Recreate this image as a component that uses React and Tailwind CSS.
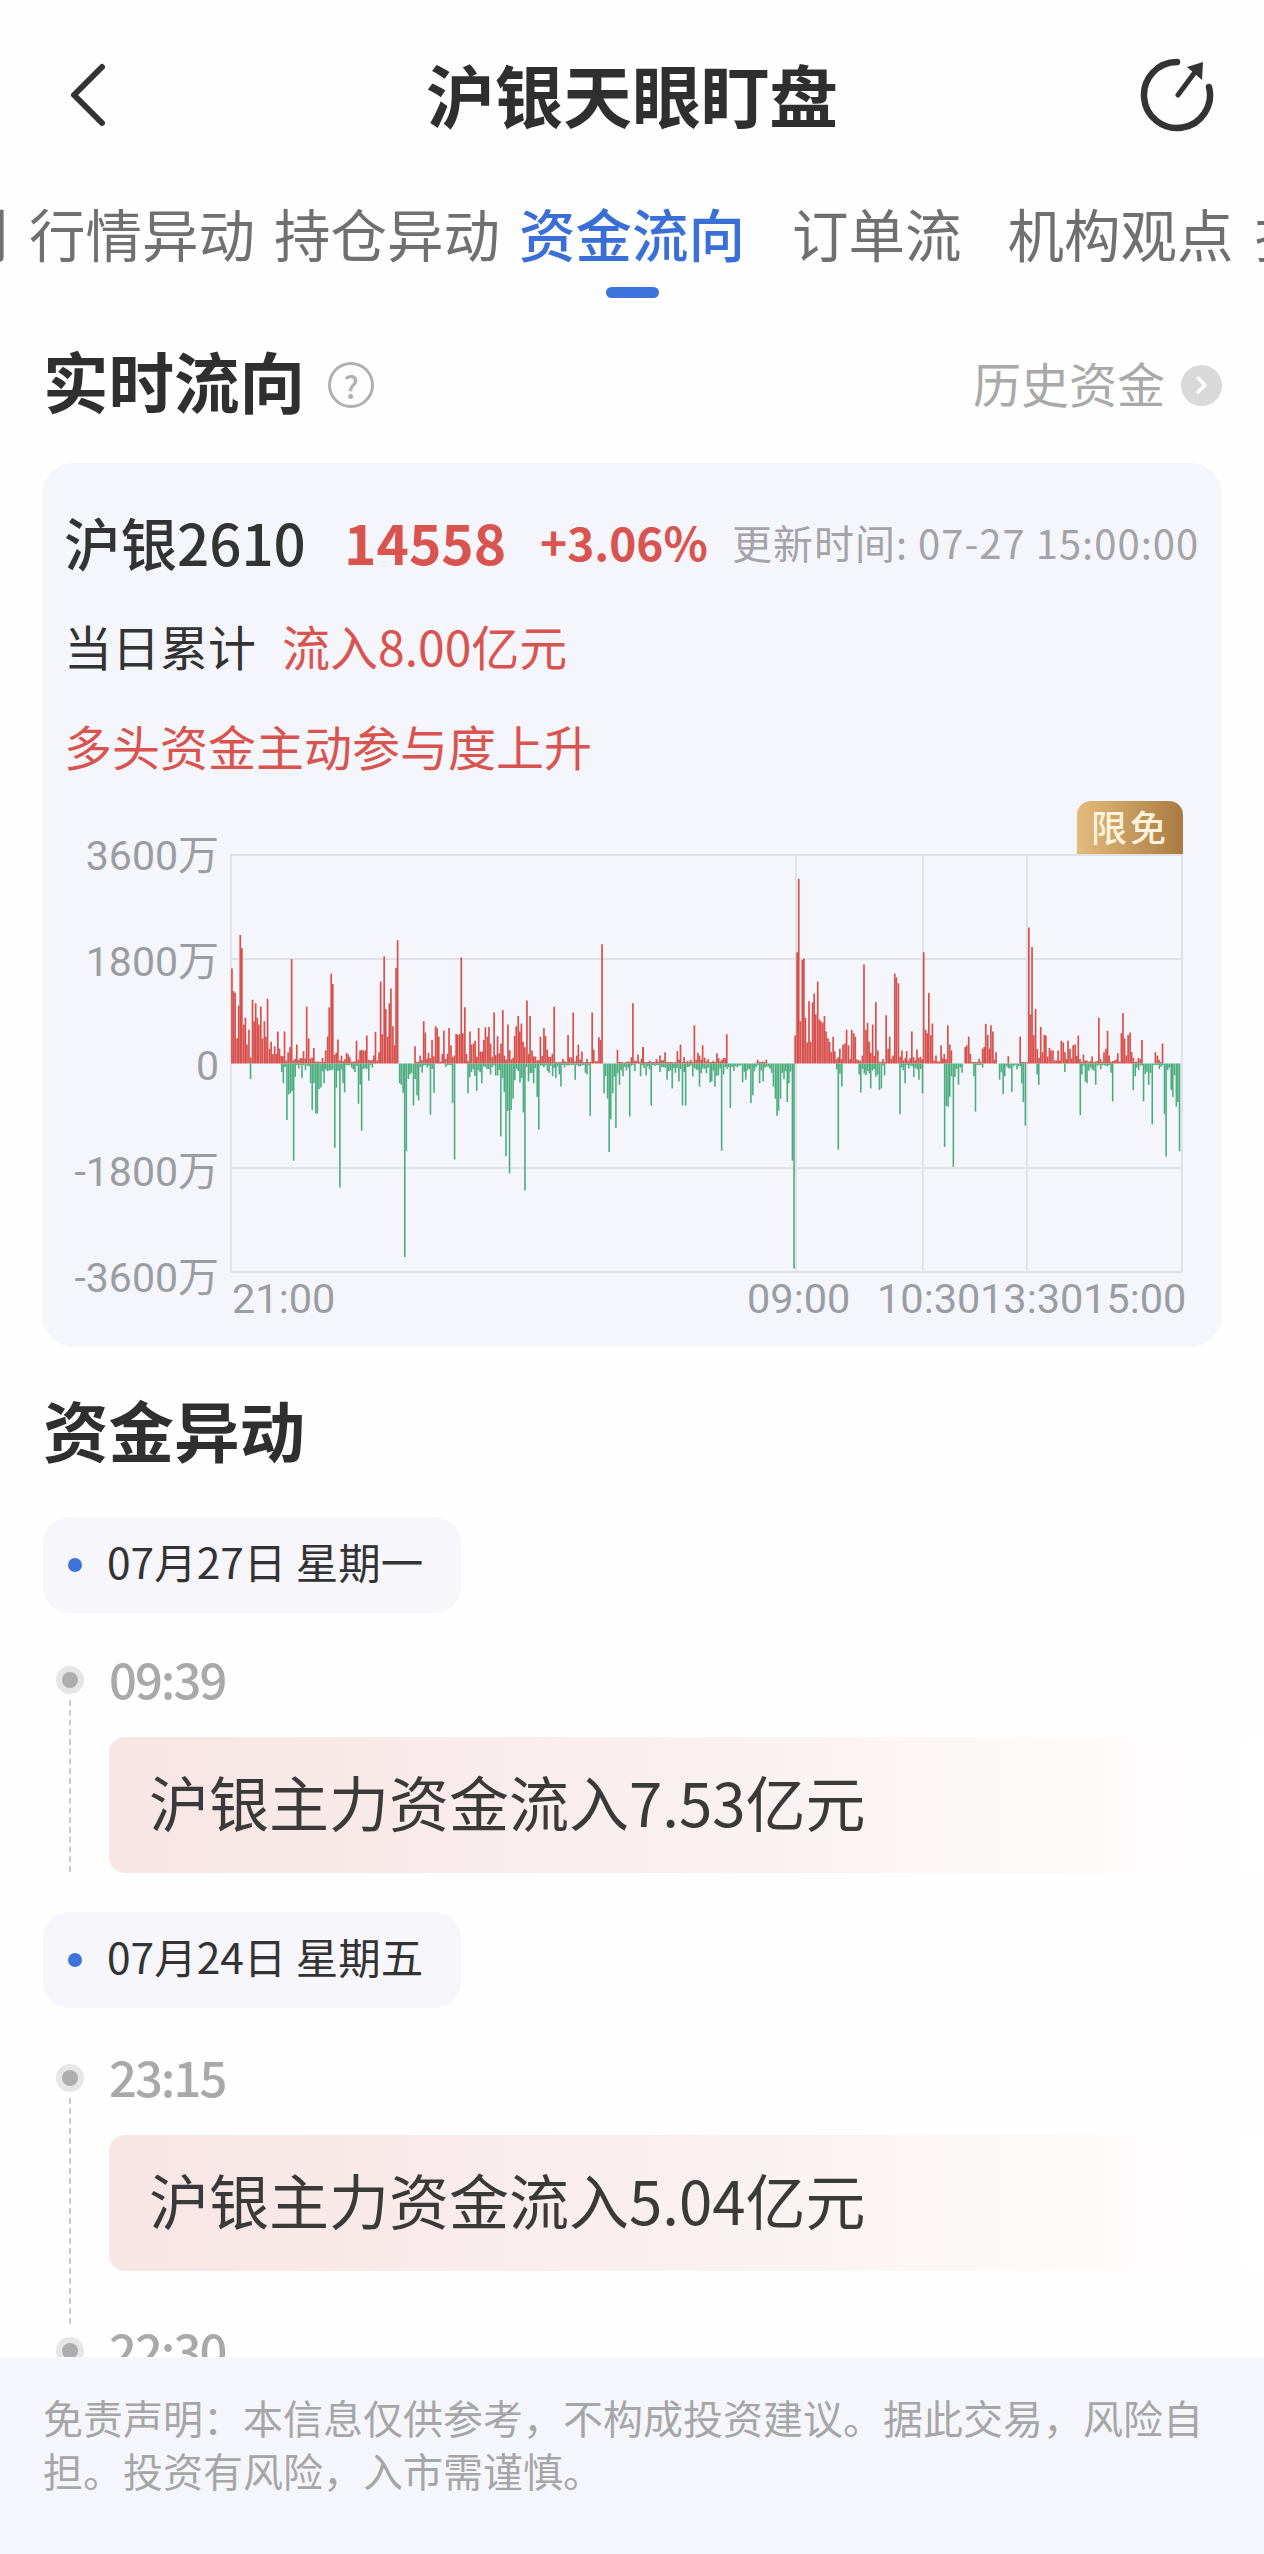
const RL = [[488,547],[492,613],[496,618],[501,750],[505,655],[509,450],[513,488],[518,710],[522,690],[526,768],[531,725],[540,638],[544,700],[548,648],[552,690],[556,710],[561,657],[565,750],[570,700],[574,745],[578,635],[583,780],[587,760],[596,773],[600,795],[604,730],[608,780],[621,730],[630,790],[635,775],[639,520],[652,768],[669,787],[677,658],[682,750],[695,778],[717,807],[725,785],[730,745],[734,660],[739,562],[743,592],[756,753],[765,800],[778,792],[782,797],[786,805],[803,757],[812,785],[816,783],[820,785],[825,785],[829,742],[847,800],[851,731],[860,790],[864,585],[868,738],[873,512],[877,665],[882,745],[886,648],[890,605],[895,715],[903,545],[907,465],[951,773],[964,800],[973,700],[977,733],[985,792],[994,755],[1003,715],[1007,720],[1011,745],[1020,795],[1024,728],[1033,795],[1037,720],[1042,770],[1055,737],[1059,740],[1064,738],[1068,515],[1072,735],[1077,660],[1081,795],[1090,730],[1094,768],[1099,765],[1103,757],[1112,720],[1125,755],[1129,718],[1134,745],[1138,717],[1142,765],[1151,675],[1173,668],[1177,800],[1186,710],[1203,743],[1207,715],[1212,685],[1216,730],[1220,707],[1234,640],[1242,685],[1247,785],[1268,745],[1277,720],[1281,743],[1303,658],[1311,820],[1325,810],[1338,740],[1342,805],[1347,805],[1351,675],[1360,800],[1364,768],[1373,788],[1386,810],[1399,675],[1403,783],[1416,747],[1420,755],[1424,477],[1463,783],[1481,820],[1490,817],[1498,805],[1502,648],[1515,797],[1528,775]];
const GL = [[535,868],[614,848],[618,880],[627,987],[644,1105],[648,862],[657,838],[665,865],[674,842],[687,880],[691,958],[700,968],[704,968],[708,898],[713,893],[721,880],[748,1068],[752,893],[761,1183],[769,880],[773,907],[791,835],[795,840],[799,848],[808,940],[816,1018],[834,873],[843,835],[912,880],[916,885],[921,908],[925,1385],[929,1078],[934,868],[938,855],[942,850],[947,945],[956,915],[960,930],[969,850],[982,835],[990,972],[999,908],[1029,833],[1046,938],[1051,1102],[1085,910],[1107,902],[1120,880],[1142,855],[1155,858],[1160,858],[1168,1035],[1181,1092],[1190,1142],[1194,958],[1199,925],[1225,965],[1229,1192],[1238,875],[1251,880],[1260,920],[1264,1015],[1286,845],[1290,850],[1299,860],[1307,865],[1316,855],[1320,890],[1329,835],[1356,870],[1382,850],[1386,855],[1394,975],[1429,910],[1433,860],[1438,925],[1442,1080],[1446,985],[1451,910],[1459,1010],[1468,885],[1477,860],[1494,977],[1507,845]];
const RR = [[10,775],[27,815],[44,810],[53,800],[66,790],[88,820],[97,787],[105,768],[114,805],[123,815],[131,812],[140,712],[149,792],[153,800],[161,770],[166,806],[175,810],[188,815],[197,793],[222,738],[300,812],[322,812],[395,742],[400,500],[404,287],[408,700],[413,522],[417,518],[421,690],[430,642],[434,760],[439,645],[443,620],[447,680],[452,585],[456,695],[460,700],[465,705],[469,685],[473,730],[478,750],[482,760],[486,790],[491,745],[495,788],[508,780],[516,768],[521,765],[525,725],[530,770],[538,725],[543,735],[547,745],[565,800],[569,535],[574,725],[578,705],[582,760],[591,710],[599,645],[604,785],[617,810],[625,683],[630,780],[634,745],[647,562],[651,573],[656,590],[665,785],[677,787],[690,730],[703,782],[720,500],[725,725],[729,735],[733,618],[738,740],[742,707],[751,800],[764,770],[772,795],[781,712],[786,768],[790,785],[825,775],[829,770],[834,745],[838,795],[860,810],[869,780],[873,775],[877,708],[882,740],[890,712],[895,730],[903,790],[934,802],[964,745],[982,820],[986,428],[990,680],[994,485],[1003,665],[1016,717],[1025,740],[1029,742],[1038,778],[1042,785],[1047,785],[1060,785],[1068,757],[1073,762],[1085,757],[1090,780],[1098,770],[1103,768],[1111,742],[1124,797],[1146,803],[1163,690],[1176,790],[1181,780],[1185,728],[1189,800],[1211,793],[1220,735],[1224,676],[1228,750],[1237,740],[1242,733],[1246,790],[1272,755],[1306,790],[1311,800],[1324,765]];
const GR = [[4,860],[18,858],[31,945],[40,830],[53,848],[71,870],[84,895],[92,850],[101,875],[110,945],[118,945],[136,860],[153,890],[180,878],[184,875],[192,890],[209,1076],[214,855],[231,952],[240,845],[262,878],[270,870],[283,938],[288,915],[292,845],[305,880],[314,875],[340,890],[345,925],[349,975],[353,960],[358,925],[375,935],[379,880],[388,1105],[392,1418],[500,840],[504,1073],[513,890],[557,855],[561,907],[586,895],[608,900],[613,895],[621,858],[660,970],[673,880],[682,838],[695,862],[708,870],[717,910],[773,1065],[795,1123],[799,862],[808,885],[817,850],[847,860],[851,963],[869,835],[912,870],[921,912],[925,860],[943,905],[956,840],[968,880],[972,935],[977,1003],[1007,855],[1011,885],[1077,848],[1116,973],[1120,855],[1129,875],[1133,880],[1155,885],[1168,840],[1194,850],[1198,933],[1250,900],[1255,860],[1276,933],[1289,885],[1298,1000],[1316,840],[1329,970],[1333,1093],[1346,900],[1350,920],[1359,948],[1363,935],[1367,1078]];

const KX = 620 / 1568;
const KY = 540 / 1568;
const PLOT_X = 231;
const ZERO = 1063.5 - 854;

function toBars(list, originX) {
  const out = [];
  let seed = originX + 7;
  const rnd = () => {
    seed = (seed * 9301 + 49297) % 233280;
    return seed / 233280;
  };
  list.forEach(([zx, zy], i) => {
    const x = originX + zx * KX - PLOT_X;
    const h = Math.abs(zy - 823) * KY;
    out.push([x, h]);
    const next = list[i + 1];
    if (next && next[0] - zx > 6 && next[0] - zx < 30) {
      const nh = Math.abs(next[1] - 823) * KY;
      for (let fx = zx + 4.35; fx < next[0] - 2; fx += 4.35) {
        out.push([originX + fx * KX - PLOT_X, Math.max(1.5, Math.min(h, nh) * (0.15 + rnd() * 0.4))]);
      }
    }
  });
  return out;
}

const redBars = [...toBars(RL, 40), ...toBars(RR, 640)];
const greenBars = [...toBars(GL, 40), ...toBars(GR, 640)];

const DISCLAIMER = "\u514D\u8D23\u58F0\u660E\uFF1A\u672C\u4FE1\u606F\u4EC5\u4F9B\u53C2\u8003\uFF0C\u4E0D\u6784\u6210\u6295\u8D44\u5EFA\u8BAE\u3002\u636E\u6B64\u4EA4\u6613\uFF0C\u98CE\u9669\u81EA\u62C5\u3002\u6295\u8D44\u6709\u98CE\u9669\uFF0C\u5165\u5E02\u9700\u8C28\u614E\u3002";

function Chart() {
  return (
    <svg width="953" height="419" viewBox="0 0 953 419" className="block">
      <g stroke="#e0e2e9" strokeWidth="2" fill="none">
        <rect x="1" y="1" width="951" height="417" />
        <line x1="0" y1="105" x2="953" y2="105" />
        <line x1="0" y1="314" x2="953" y2="314" />
        <line x1="566" y1="0" x2="566" y2="419" />
        <line x1="693" y1="0" x2="693" y2="419" />
        <line x1="797" y1="0" x2="797" y2="419" />
      </g>
      <g stroke="#d8504c" strokeWidth="1.7">
        {redBars.map(([x, h], i) => (
          <line key={i} x1={x} x2={x} y1={ZERO} y2={ZERO - h} />
        ))}
      </g>
      <g stroke="#4cad7f" strokeWidth="1.6">
        {greenBars.map(([x, h], i) => (
          <line key={i} x1={x} x2={x} y1={ZERO} y2={ZERO + h} />
        ))}
      </g>
    </svg>
  );
}

function DatePill({ children }) {
  return (
    <div className="flex h-[96px] w-[418px] items-center rounded-[26px] bg-[#f6f6fb] pl-[25px]">
      <span className="h-[14px] w-[14px] rounded-full bg-[#3f73dc]" />
      <span className="ml-[25px] pb-[8px] text-[42.5px] leading-none text-[#333]">{children}</span>
    </div>
  );
}

function TimeDot() {
  return (
    <span className="flex h-[28px] w-[28px] shrink-0 items-center justify-center rounded-full bg-[#e6e6e6]">
      <span className="h-[16px] w-[16px] rounded-full bg-[#adadad]" />
    </span>
  );
}

function Event({ time, text, lineClass, tail }) {
  return (
    <div className="relative pl-[66px]">
      <div className={`absolute left-[26px] top-[50px] w-0 border-l-2 border-dashed border-[#c9c9c9] ${lineClass}`} />
      <div className="flex h-[60px] items-center">
        <span className="absolute left-[13px]"><TimeDot /></span>
        <span className="pb-[6px] text-[49px] font-medium leading-none tracking-[-2px] text-[#a9a9a9]">{time}</span>
      </div>
      <div className="mt-[27px] flex h-[136px] items-center rounded-l-[16px] bg-gradient-to-r from-[#f8e5e5] via-[#faf0f0] to-[#ffffff] pl-[40px]">
        <span className="pb-[8px] text-[60px] leading-none text-[#3a3a3a]">{text}</span>
      </div>
      {tail}
    </div>
  );
}

export default function App() {
  return (
    <div
      className="relative h-[2554px] w-[1264px] overflow-hidden bg-[#fefefe]"
      style={{ fontFamily: '"Noto Sans CJK SC", "Noto Sans", sans-serif' }}
    >
      <header className="flex h-[190px] items-center pl-[66px] pr-[48px]">
        <svg width="44" height="64" viewBox="0 0 44 64" fill="none" className="shrink-0">
          <path d="M36 4 L8 32 L36 60" stroke="#333" strokeWidth="6" strokeLinecap="round" strokeLinejoin="round" />
        </svg>
        <h1 className="ml-[14px] flex-1 pb-[4px] text-center text-[68.7px] font-bold leading-none text-[#2f2f2f]">沪银天眼盯盘</h1>
        <svg width="76" height="76" viewBox="0 0 76 76" fill="none" className="shrink-0">
          <path d="M37 5 A33 33 0 1 0 69 30" stroke="#333" strokeWidth="6.5" strokeLinecap="round" />
          <path d="M38 38 L58 11" stroke="#333" strokeWidth="5" strokeLinecap="round" />
          <path d="M47 10 L63 5 L62 23 Z" fill="#333" />
        </svg>
      </header>

      <nav className="relative flex h-[108px] items-start overflow-hidden whitespace-nowrap text-[56.5px] leading-[84px] text-[#707070]">
        <span className="ml-[-48px] w-[56.5px]">别</span>
        <span className="ml-[20.5px] w-[226px]">行情异动</span>
        <span className="ml-[19px] w-[226px]">持仓异动</span>
        <span className="ml-[19px] w-[226px] font-medium text-[#3b6fd8]">资金流向</span>
        <span className="ml-[47px] w-[169.5px]">订单流</span>
        <span className="ml-[46px] w-[226px]">机构观点</span>
        <span className="ml-[21.5px] w-[56.5px]">持</span>
        <span className="absolute bottom-0 left-[606px] h-[11px] w-[53px] rounded-full bg-[#3f73dc]" />
      </nav>

      <section className="mt-[37px] flex h-[100px] items-center justify-between pl-[43px] pr-[42px]">
        <div className="flex items-center">
          <h2 className="pb-[10px] text-[65.5px] font-bold leading-none text-[#2f2f2f]">实时流向</h2>
          <span className="ml-[23px] flex h-[46px] w-[46px] items-center justify-center rounded-full border-[3.5px] border-[#b0b0b0] text-[31px] font-medium leading-none text-[#b0b0b0]">?</span>
        </div>
        <div className="flex items-center">
          <span className="pb-[6px] text-[48px] leading-none text-[#a9a9a9]">历史资金</span>
          <span className="ml-[16px] flex h-[41px] w-[41px] items-center justify-center rounded-full bg-[#d9d9d9]">
            <svg width="14" height="20" viewBox="0 0 14 20" fill="none">
              <path d="M3 3 L10 10 L3 17" stroke="#fff" strokeWidth="3.5" strokeLinecap="round" strokeLinejoin="round" />
            </svg>
          </span>
        </div>
      </section>

      <section className="mx-[42px] mt-[28px] h-[884px] rounded-[32px] bg-[#f5f6fb] pl-[22px] pt-[41px]">
        <div className="flex h-[80px] items-center whitespace-nowrap">
          <span className="w-[241px] pb-[6px] text-[56.5px] font-medium leading-none text-[#333]">沪银2610</span>
          <span className="ml-[39px] w-[162px] pb-[6px] text-[55px] font-bold leading-none text-[#d9534f]">14558</span>
          <span className="ml-[34px] w-[166px] pb-[6px] text-[46px] font-bold leading-none text-[#d9534f]">+3.06%</span>
          <span className="ml-[26px] pb-[4px] text-[40px] leading-none tracking-[1px] text-[#a3a3a8]">更新时间: 07-27 15:00:00</span>
        </div>
        <div className="mt-[34px] flex h-[60px] items-center pb-[6px] leading-none">
          <span className="text-[48px] text-[#333]">当日累计</span>
          <span className="ml-[26px] text-[48px] text-[#d9534f]">流入8.00亿元</span>
        </div>
        <div className="mt-[40px] flex h-[60px] items-center pb-[6px] text-[48px] leading-none text-[#d9534f]">多头资金主动参与度上升</div>
        <div className="relative mt-[76px] flex items-start" style={{ fontFamily: 'Roboto, "Noto Sans CJK SC", sans-serif' }}>
          <div className="mt-[-22px] flex h-[470px] w-[155px] flex-col justify-between text-right text-[41px] leading-[48px] text-[#9b9da4]">
            <span>3600万</span>
            <span>1800万</span>
            <span className="mt-[-3px]">0</span>
            <span>-1800万</span>
            <span>-3600万</span>
          </div>
          <div className="relative ml-[11px] w-[953px]">
            <span className="absolute right-0 top-[-53px] flex h-[53px] w-[106px] items-center justify-center rounded-t-[14px] bg-gradient-to-r from-[#e3bb7c] to-[#a97b43] pb-[3px] text-[36px] font-medium leading-none tracking-[3px] text-[#fff3dc]" style={{ fontFamily: '"Noto Sans CJK SC", sans-serif' }}>限免</span>
            <Chart />
            <div className="flex h-[48px] whitespace-nowrap pt-[2px] text-[41.5px] leading-[48px] text-[#9b9da4]">
              <span className="ml-[2px] w-[103px]">21:00</span>
              <span className="ml-[412px] w-[103px]">09:00</span>
              <span className="ml-[27px] w-[103px]">10:30</span>
              <span className="w-[103px]">13:30</span>
              <span>15:00</span>
            </div>
          </div>
        </div>
      </section>

      <h2 className="ml-[43px] mt-[42px] flex h-[80px] items-center text-[65.5px] font-bold leading-none text-[#2f2f2f]">资金异动</h2>

      <div className="ml-[43px] mt-[48px]">
        <DatePill>07月27日 星期一</DatePill>
        <div className="mt-[37px]">
          <Event time="09:39" text="沪银主力资金流入7.53亿元" lineClass="h-[172px]" />
        </div>
        <div className="mt-[39px]">
          <DatePill>07月24日 星期五</DatePill>
        </div>
        <div className="mt-[40px]">
          <Event
            time="23:15"
            text="沪银主力资金流入5.04亿元"
            lineClass="h-[226px]"
            tail={
              <div className="relative mt-[50px] flex h-[60px] items-center">
                <span className="absolute left-[-53px]"><TimeDot /></span>
                <span className="pb-[6px] text-[49px] font-medium leading-none tracking-[-2px] text-[#a9a9a9]">22:30</span>
              </div>
            }
          />
        </div>
      </div>

      <footer className="absolute inset-x-0 bottom-0 h-[197px] bg-[#f5f6fb] pl-[43px] pr-[40px] pt-[34px] text-[40px] leading-[53px] text-[#a6a6a6]">
        {DISCLAIMER}
      </footer>
    </div>
  );
}
